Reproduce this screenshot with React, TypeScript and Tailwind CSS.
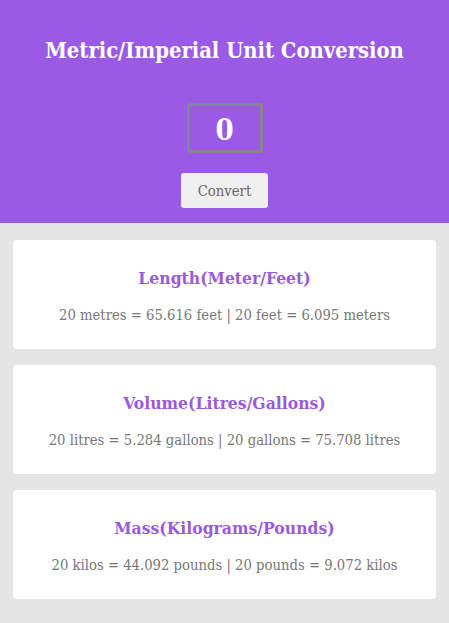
import { useState } from "react"

const serif = "font-['DejaVu_Serif_Condensed','DejaVu_Serif','Liberation_Serif',serif]"

interface Conversion {
  title: string
  text: string
}

const results: Conversion[] = [
  { title: "Length(Meter/Feet)", text: "20 metres = 65.616 feet | 20 feet = 6.095 meters" },
  { title: "Volume(Litres/Gallons)", text: "20 litres = 5.284 gallons | 20 gallons = 75.708 litres" },
  { title: "Mass(Kilograms/Pounds)", text: "20 kilos = 44.092 pounds | 20 pounds = 9.072 kilos" },
]

export default function App() {
  const [value, setValue] = useState("0")

  return (
    <div className={`min-h-[623px] bg-[#e5e5e5] ${serif}`}>
      <header className="flex h-[223px] flex-col items-center bg-[#9b5ae6] pt-[35px]">
        <h1 className="text-[21.8px] font-bold leading-[32px] text-white">
          Metric/Imperial Unit Conversion
        </h1>
        <input
          value={value}
          onChange={(e) => setValue(e.target.value)}
          className="mt-[36px] h-[50px] w-[76px] rounded-[3px] border-[3px] border-[#878390] bg-transparent pt-[3px] text-center text-[29px] font-bold text-white outline-none"
        />
        <button className="mt-[20px] h-[35px] w-[87px] rounded-[3px] bg-[#efefef] pt-[1px] text-[14.7px] text-[#666]">
          Convert
        </button>
      </header>
      <main className="flex flex-col gap-[16px] px-[13px] pt-[17px] pb-[23px]">
        {results.map((r) => (
          <section
            key={r.title}
            className="flex h-[109px] flex-col items-center rounded-[4px] bg-white pt-[26px]"
          >
            <h2 className="text-[17.4px] font-bold leading-[24px] text-[#9b5ad9]">{r.title}</h2>
            <p className="mt-[15px] text-[14.7px] leading-[20px] text-[#777]">{r.text}</p>
          </section>
        ))}
      </main>
    </div>
  )
}
